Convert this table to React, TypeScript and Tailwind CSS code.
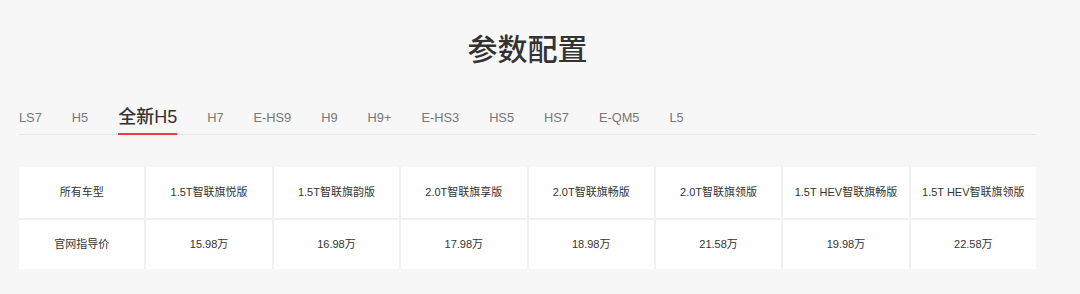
import React, { useState } from "react";

const tabs = ["LS7", "H5", "全新H5", "H7", "E-HS9", "H9", "H9+", "E-HS3", "HS5", "HS7", "E-QM5", "L5"];

const models = [
  "1.5T智联旗悦版",
  "1.5T智联旗韵版",
  "2.0T智联旗享版",
  "2.0T智联旗畅版",
  "2.0T智联旗领版",
  "1.5T HEV智联旗畅版",
  "1.5T HEV智联旗领版",
];

const prices = ["15.98万", "16.98万", "17.98万", "18.98万", "21.58万", "19.98万", "22.58万"];

const font = { fontFamily: '"Liberation Sans", "Noto Sans CJK SC", sans-serif' };

export default function App() {
  const [active, setActive] = useState("全新H5");

  return (
    <div className="w-[1080px] h-[294px] bg-[#f7f7f7] overflow-hidden" style={font}>
      <div className="ml-[19px] w-[1017px]">
        <h2 className="pt-[32px] h-[66px] text-center text-[30px] leading-[36px] font-medium text-[#333]">参数配置</h2>

        <div className="mt-[34px] flex items-end gap-[30px] border-b border-[#e6e7eb]">
          {tabs.map((t) => {
            const on = t === active;
            return (
              <button
                key={t}
                onClick={() => setActive(t)}
                className={
                  on
                    ? "relative h-[34px] leading-[32px] text-[18px] text-[#333] font-medium"
                    : "relative h-[34px] leading-[36px] text-[12.8px] text-[#777]"
                }
              >
                {t}
                {on && <span className="absolute left-0 right-0 bottom-[-1px] h-[2px] bg-[#ee3a48]" />}
              </button>
            );
          })}
        </div>

        <div className="mt-[32px] grid grid-cols-8 gap-[2px] bg-[#eef0f6] text-[11px] text-[#333]">
          <div className="h-[51px] bg-white flex items-center justify-center">所有车型</div>
          {models.map((m) => (
            <div key={m} className="h-[51px] bg-white flex items-center justify-center">
              {m}
            </div>
          ))}
          <div className="h-[49px] bg-white flex items-center justify-center">官网指导价</div>
          {prices.map((p) => (
            <div key={p} className="h-[49px] bg-white flex items-center justify-center">
              {p}
            </div>
          ))}
        </div>
      </div>
    </div>
  );
}
